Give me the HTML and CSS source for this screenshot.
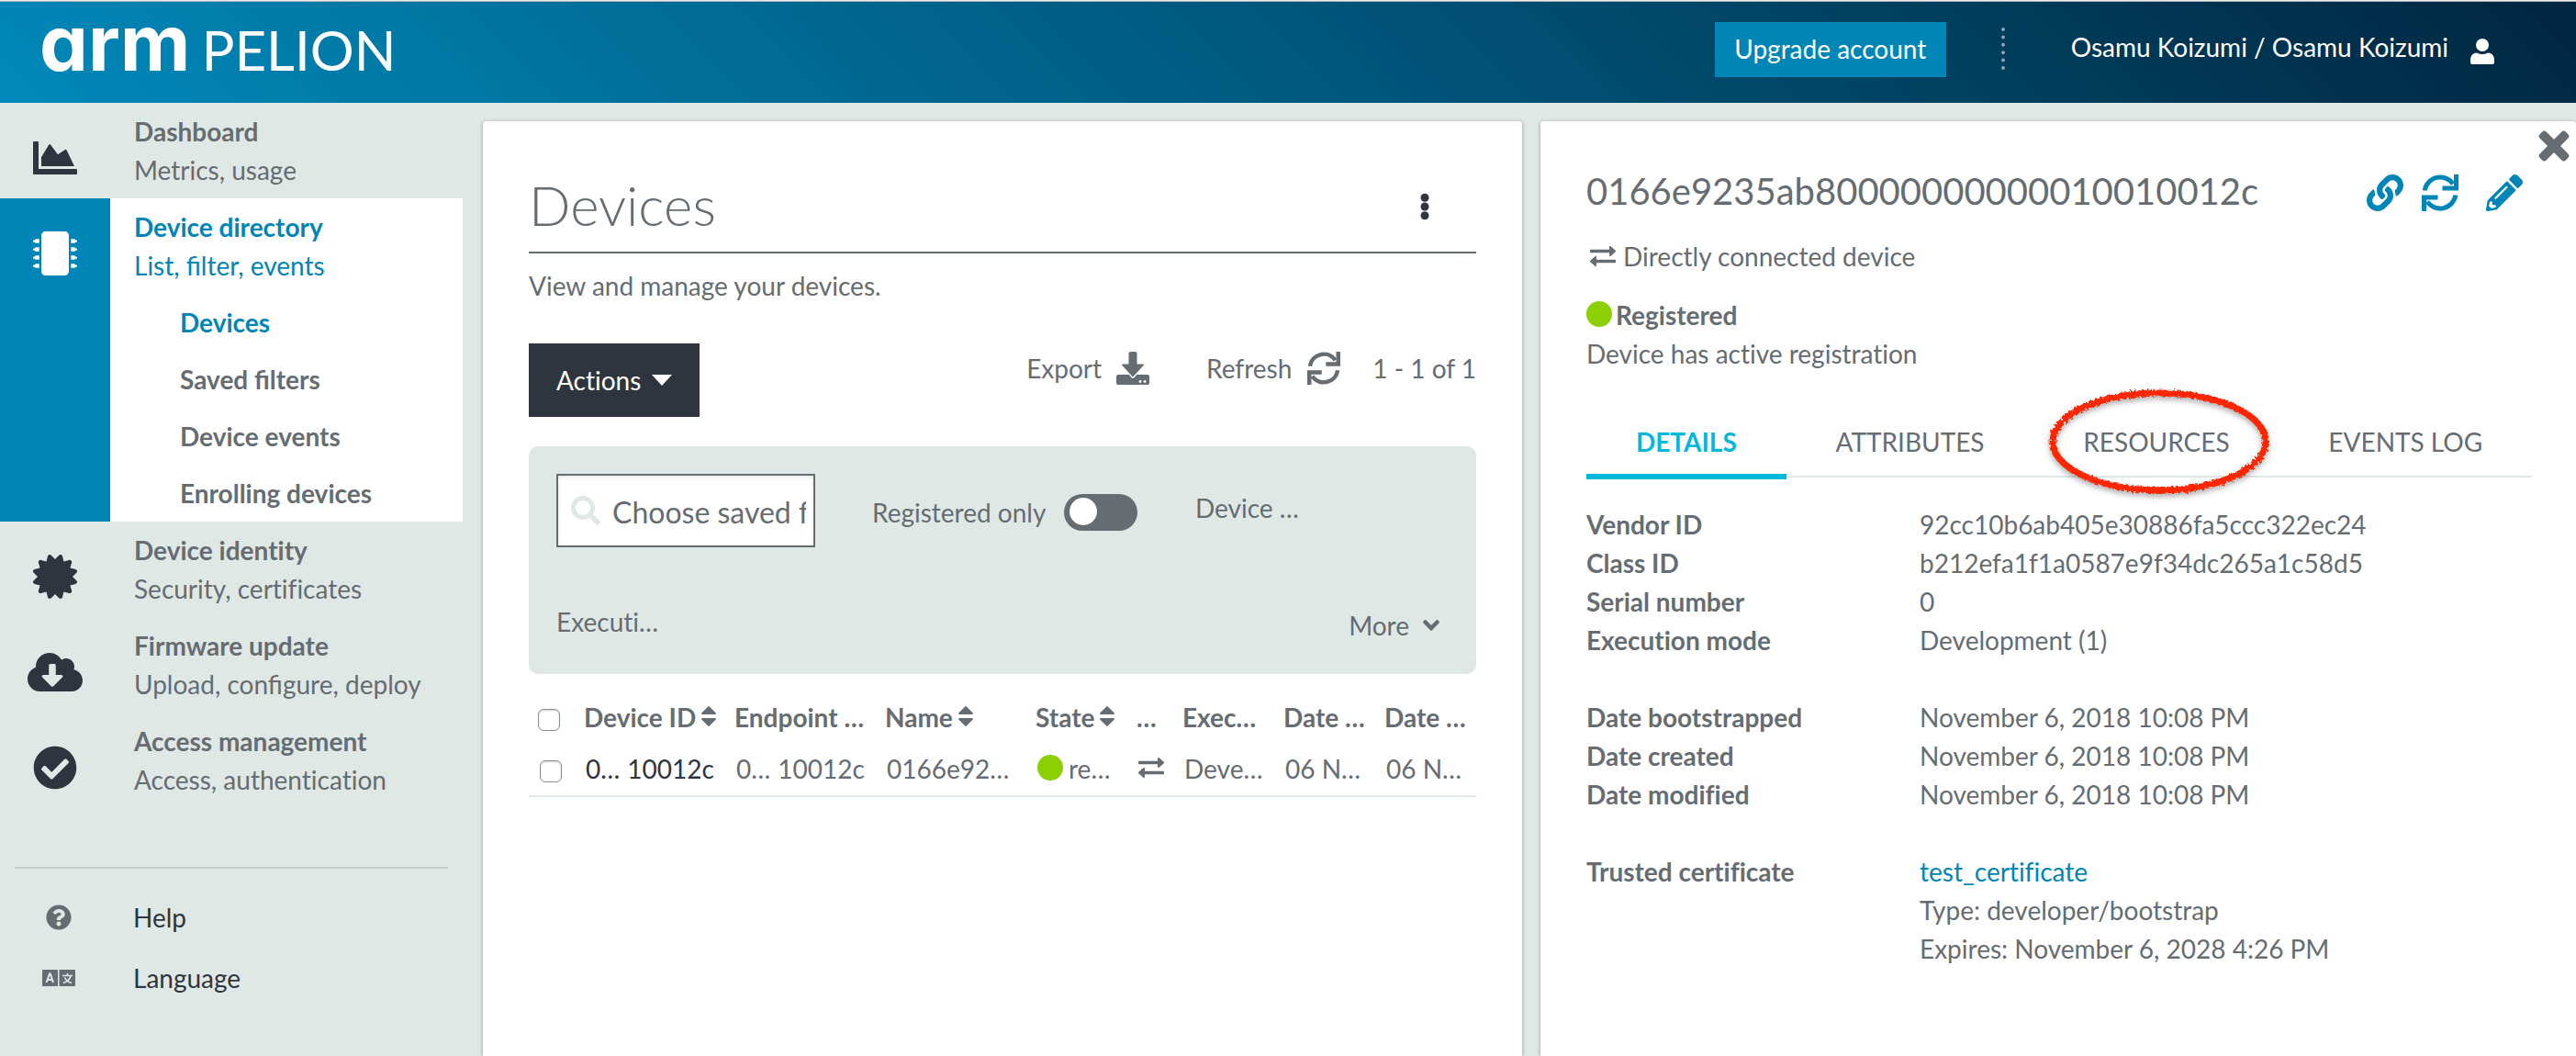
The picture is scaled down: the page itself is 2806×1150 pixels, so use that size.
FILE: index.html
```html
<!DOCTYPE html>
<html lang="en">
<head>
<meta charset="utf-8">
<title>Devices - Arm Pelion</title>
<meta name="viewport" content="width=device-width, initial-scale=1">
<link rel="stylesheet" href="styles.css">
</head>
<body>
<svg class="sprite" aria-hidden="true">
  <symbol id="i-refresh" viewBox="0 0 40 40">
    <path d="M3.2 17.5A17 17 0 0 1 34 10.3M36.800 22.500A17 17 0 0 1 6 29.700" fill="none" stroke="currentColor" stroke-width="5"/>
    <path d="M35 0h5v17.500H22.500v-5H35zM5 40H0V22.500h17.500v5H5z" fill="currentColor"/>
  </symbol>
  <symbol id="i-exchange" viewBox="0 0 28 22">
    <path d="M1 3.800h20V1a1 1 0 0 1 1.700-.7l5 4.500a1 1 0 0 1 0 1.400l-5 4.500A1 1 0 0 1 21 10V7.200H1a1 1 0 0 1-1-1V4.800a1 1 0 0 1 1-1zM27 14.800H7V12a1 1 0 0 0-1.700-.7l-5 4.500a1 1 0 0 0 0 1.400l5 4.500A1 1 0 0 0 7 21v-2.800h20a1 1 0 0 0 1-1v-1.400a1 1 0 0 0-1-1z" fill="currentColor"/>
  </symbol>
  <symbol id="i-sort" viewBox="0 0 16 22">
    <path d="M7.300.4a1 1 0 0 1 1.400 0l6.900 6.900c.6.600.2 1.700-.7 1.700H1.100C.2 9-.2 7.900.4 7.300zM7.300 21.600a1 1 0 0 0 1.400 0l6.900-6.900c.6-.6.200-1.700-.7-1.700H1.100c-.9 0-1.300 1.100-.7 1.700z" fill="currentColor"/>
  </symbol>
</svg>

<header class="header">
  <a class="logo" href="#"><span class="logo-arm">arm</span><span class="logo-pelion">PELION</span></a>
  <div class="header-right">
    <button class="upgrade" type="button">Upgrade account</button>
    <span class="dots"></span>
    <a class="account" href="#">
      <span>Osamu Koizumi / Osamu Koizumi</span>
      <svg width="26" height="28" viewBox="0 0 26 28" fill="currentColor"><circle cx="13" cy="7" r="7"/><path d="M7 15.500c4 2 8 2 12 0 4 0 7 3 7 7.500v3a2 2 0 0 1-2 2H2a2 2 0 0 1-2-2v-3c0-4.500 3-7.500 7-7.500z"/></svg>
    </a>
  </div>
</header>

<div class="page">
  <div class="sidebar">
    <nav class="nav">
      <div class="nav-item">
        <div class="nav-icon"><svg width="48" height="48" viewBox="0 0 512 512" fill="currentColor"><path d="M500 384c6.600 0 12 5.400 12 12v40c0 6.600-5.400 12-12 12H12c-6.600 0-12-5.400-12-12V76c0-6.600 5.400-12 12-12h40c6.600 0 12 5.400 12 12v308h436zM372.700 159.500L288 216l-85.300-113.700c-5.100-6.800-15.500-6.300-19.900 1L96 248v104h384l-89.900-187.800c-3.200-6.500-11.400-8.700-17.400-4.700z"/></svg></div>
        <div class="nav-body"><a href="#"><strong>Dashboard</strong><span>Metrics, usage</span></a></div>
      </div>
      <div class="nav-item active">
        <div class="nav-icon"><svg width="48" height="48" viewBox="0 0 512 512" fill="currentColor"><path d="M416 48v416c0 26.500-21.500 48-48 48H144c-26.500 0-48-21.500-48-48V48c0-26.500 21.500-48 48-48h224c26.500 0 48 21.500 48 48z"/><path id="pins" d="M512 106v12a6 6 0 0 1-6 6h-18v6a6 6 0 0 1-6 6h-42V88h42a6 6 0 0 1 6 6v6h18a6 6 0 0 1 6 6zM0 106v12a6 6 0 0 0 6 6h18v6a6 6 0 0 0 6 6h42V88H30a6 6 0 0 0-6 6v6H6a6 6 0 0 0-6 6z"/><use href="#pins" y="96"/><use href="#pins" y="192"/><use href="#pins" y="288"/></svg></div>
        <div class="nav-body">
          <a href="#"><strong>Device directory</strong><span class="lig">List, filter, events</span></a>
          <ul class="subnav">
            <li><a class="current" href="#">Devices</a></li>
            <li><a class="lig" href="#">Saved filters</a></li>
            <li><a href="#">Device events</a></li>
            <li><a href="#">Enrolling devices</a></li>
          </ul>
        </div>
      </div>
      <div class="nav-item">
        <div class="nav-icon"><svg width="48" height="48" viewBox="0 0 512 512" fill="currentColor"><path d="M458.622 255.920l45.985-45.005c13.708-12.977 7.316-36.039-10.664-40.339l-62.650-15.990 17.661-62.015c4.991-17.838-11.829-34.663-29.661-29.671l-61.994 17.667-15.984-62.671C337.085.197 313.765-6.276 300.990 7.228L256 53.570 211.011 7.229c-12.630-13.351-36.047-7.234-40.325 10.668l-15.984 62.671-61.995-17.667C74.870 57.907 58.056 74.738 63.046 92.572l17.661 62.015-62.650 15.990C.069 174.878-6.310 197.944 7.392 210.915l45.985 45.005-45.985 45.004c-13.708 12.977-7.316 36.039 10.664 40.339l62.650 15.990-17.661 62.015c-4.991 17.838 11.829 34.663 29.661 29.671l61.994-17.667 15.984 62.671c4.439 18.575 27.696 24.018 40.325 10.668L256 458.610l44.989 46.001c12.500 13.488 35.987 7.486 40.325-10.668l15.984-62.671 61.994 17.667c17.836 4.994 34.651-11.837 29.661-29.671l-17.661-62.015 62.650-15.990c17.987-4.302 24.366-27.367 10.664-40.339l-45.984-45.004z"/></svg></div>
        <div class="nav-body"><a href="#"><strong>Device identity</strong><span>Security, certificates</span></a></div>
      </div>
      <div class="nav-item">
        <div class="nav-icon"><svg width="60" height="48" viewBox="0 0 640 512" fill="currentColor"><path d="M537.600 226.600c4.100-10.700 6.400-22.400 6.400-34.600 0-53-43-96-96-96-19.700 0-38.100 6-53.300 16.200C367 64.200 315.300 32 256 32c-88.400 0-160 71.600-160 160 0 2.700.1 5.400.2 8.100C40.200 219.800 0 273.200 0 336c0 79.500 64.500 144 144 144h368c70.700 0 128-57.300 128-128 0-61.900-44-113.600-102.400-125.400zm-132.900 88.700L299.300 420.700c-6.200 6.200-16.400 6.200-22.600 0L171.300 315.300c-10.100-10.100-2.900-27.300 11.300-27.300H248V176c0-8.800 7.200-16 16-16h48c8.800 0 16 7.200 16 16v112h65.400c14.200 0 21.400 17.200 11.300 27.300z"/></svg></div>
        <div class="nav-body"><a href="#"><strong>Firmware update</strong><span class="lig">Upload, configure, deploy</span></a></div>
      </div>
      <div class="nav-item">
        <div class="nav-icon"><svg width="48" height="48" viewBox="0 0 512 512" fill="currentColor"><path d="M504 256c0 136.967-111.033 248-248 248S8 392.967 8 256 119.033 8 256 8s248 111.033 248 248zM227.314 387.314l184-184c6.248-6.248 6.248-16.379 0-22.627l-22.627-22.627c-6.248-6.249-16.379-6.249-22.628 0L216 308.118l-70.059-70.059c-6.248-6.248-16.379-6.248-22.628 0l-22.627 22.627c-6.248 6.248-6.248 16.379 0 22.627l104 104c6.249 6.249 16.379 6.249 22.628.001z"/></svg></div>
        <div class="nav-body"><a href="#"><strong>Access management</strong><span>Access, authentication</span></a></div>
      </div>
    </nav>
    <nav class="support">
      <a href="#"><span class="support-icon"><svg width="28" height="28" viewBox="0 0 512 512" fill="currentColor"><path d="M504 256c0 136.997-111.043 248-248 248S8 392.997 8 256C8 119.083 119.043 8 256 8s248 111.083 248 248zM262.655 90c-54.497 0-89.255 22.957-116.549 63.758-3.536 5.286-2.353 12.415 2.715 16.258l34.699 26.310c5.205 3.947 12.621 3.008 16.665-2.122 17.864-22.658 30.113-35.797 57.303-35.797 20.429 0 45.698 13.148 45.698 32.958 0 14.976-12.363 22.667-32.534 33.976C247.128 238.528 216 254.941 216 296v4c0 6.627 5.373 12 12 12h56c6.627 0 12-5.373 12-12v-1.333c0-28.462 83.186-29.647 83.186-106.667 0-58.002-60.165-102-116.531-102zM256 338c-25.365 0-46 20.635-46 46 0 25.364 20.635 46 46 46s46-20.636 46-46c0-25.365-20.635-46-46-46z"/></svg></span>Help</a>
      <a href="#"><span class="support-icon"><svg width="36" height="18" viewBox="0 0 36 18"><rect width="17" height="18" rx="1" fill="currentColor"/><rect x="18.500" width="17.500" height="18" rx="1" fill="currentColor"/><path d="M4.500 14 8 4.500h.8L12 14M6 11h5" fill="none" stroke="#e0e8e6" stroke-width="2"/><path d="M22 6.500h11M27.500 4v2.500M31 7c-1 3.500-4 6-8 7.500M24.500 8.500c1 2.500 4 5 7.500 6" fill="none" stroke="#e0e8e6" stroke-width="1.600"/></svg></span>Language</a>
    </nav>
  </div>

  <main class="cards">
    <section class="card devices">
      <div class="card-title">
        <h1>Devices</h1>
        <button class="kebab" type="button" aria-label="Page menu"><svg width="10" height="30" viewBox="0 0 10 30" fill="currentColor"><circle cx="5" cy="5.300" r="4.500"/><circle cx="5" cy="15" r="4.500"/><circle cx="5" cy="24.700" r="4.500"/></svg></button>
      </div>
      <p class="intro">View and manage your devices.</p>

      <div class="toolbar">
        <button class="actions" type="button">Actions <svg width="22" height="12" viewBox="0 0 22 12"><path d="M0 0h22L11 12z" fill="#fff"/></svg></button>
        <div class="tools">
          <button class="tool" type="button">Export <svg width="36" height="36" viewBox="0 0 36 36"><rect y="25" width="36" height="11" rx="2" fill="currentColor"/><path d="M15.500 0h5a2 2 0 0 1 2 2v11.500h7L18 27 6.500 13.500h7V2a2 2 0 0 1 2-2z" fill="currentColor" stroke="#fff" stroke-width="4" stroke-linejoin="round"/><path d="M15.500 0h5a2 2 0 0 1 2 2v11.500h6.500q2 0 .6 1.600L19 26.500q-1 1-2 0L6.400 15.100Q5 13.500 7 13.500h6.500V2a2 2 0 0 1 2-2z" fill="currentColor"/><circle cx="26" cy="32.500" r="1.400" fill="#fff"/><circle cx="31" cy="32.500" r="1.400" fill="#fff"/></svg></button>
          <button class="tool" type="button">Refresh <svg width="38" height="36"><use href="#i-refresh"/></svg></button>
          <span>1 - 1 of 1</span>
        </div>
      </div>

      <div class="filters">
        <div class="search">
          <svg width="32" height="32" viewBox="0 0 512 512" fill="currentColor"><path d="M505 442.700L405.300 343c-4.500-4.500-10.600-7-17-7H372c27.600-35.300 44-79.700 44-128C416 93.100 322.900 0 208 0S0 93.100 0 208s93.100 208 208 208c48.300 0 92.700-16.400 128-44v16.300c0 6.400 2.500 12.500 7 17l99.700 99.700c9.400 9.400 24.600 9.400 33.900 0l28.300-28.300c9.400-9.400 9.400-24.600.1-34zM208 336c-70.700 0-128-57.200-128-128 0-70.700 57.200-128 128-128 70.700 0 128 57.200 128 128 0 70.700-57.200 128-128 128z"/></svg>
          <input type="text" placeholder="Choose saved filter" aria-label="Choose saved filter">
        </div>
        <label class="switch">Registered only <input type="checkbox" role="switch"></label>
        <span class="filter-device">Device …</span>
        <span>Executi…</span>
        <button class="more" type="button">More <svg width="18" height="12" viewBox="0 0 18 12"><path d="M2.500 2.500 9 9l6.500-6.500" fill="none" stroke="currentColor" stroke-width="4.500" stroke-linecap="round"/></svg></button>
      </div>

      <table class="grid">
        <colgroup><col class="c-check"><col class="c-wide"><col class="c-wide"><col class="c-wide"><col class="c-mid"><col class="c-slim"><col class="c-mid"><col class="c-mid"><col class="c-last"></colgroup>
        <thead>
          <tr>
            <th><input type="checkbox" aria-label="Select all devices"></th>
            <th><span class="cell">Device ID<svg class="sort" width="16" height="22"><use href="#i-sort"/></svg></span></th>
            <th>Endpoint …</th>
            <th><span class="cell">Name<svg class="sort" width="16" height="22"><use href="#i-sort"/></svg></span></th>
            <th><span class="cell">State<svg class="sort" width="16" height="22"><use href="#i-sort"/></svg></span></th>
            <th>…</th>
            <th>Exec…</th>
            <th>Date …</th>
            <th>Date …</th>
          </tr>
        </thead>
        <tbody>
          <tr>
            <td><input type="checkbox" aria-label="Select device 0166e9235ab80000000000010010012c"></td>
            <td class="id"><span class="cell split"><span>0…</span><span>10012c</span></span></td>
            <td><span class="cell split"><span>0…</span><span>10012c</span></span></td>
            <td>0166e92…</td>
            <td><span class="cell state"><i class="dot"></i>re…</span></td>
            <td><svg class="direct" width="28" height="22"><use href="#i-exchange"/></svg></td>
            <td>Deve…</td>
            <td>06 N…</td>
            <td>06 N…</td>
          </tr>
        </tbody>
      </table>
    </section>

    <section class="card detail">
      <button class="close" type="button" aria-label="Close"><svg width="34" height="34" viewBox="0 0 34 34" fill="currentColor"><rect x="-3" y="12" width="40" height="10" rx="3.500" transform="rotate(45 17 17)"/><rect x="-3" y="12" width="40" height="10" rx="3.500" transform="rotate(-45 17 17)"/></svg></button>
      <div class="detail-body">
        <div class="detail-title">
          <h2>0166e9235ab80000000000010010012c</h2>
          <div class="detail-actions">
            <button type="button" aria-label="Copy link"><svg width="40" height="40" viewBox="0 0 512 512" fill="currentColor"><path d="M326.612 185.391c59.747 59.809 58.927 155.698.36 214.590-.11.120-.24.250-.36.370l-67.200 67.200c-59.270 59.270-155.699 59.262-214.960 0-59.270-59.260-59.270-155.700 0-214.960l37.106-37.106c9.840-9.840 26.786-3.300 27.294 10.606.648 17.722 3.826 35.527 9.690 52.721 1.986 5.822.567 12.262-3.783 16.612l-13.087 13.087c-28.026 28.026-28.905 73.660-1.155 101.960 28.024 28.579 74.086 28.749 102.325.51l67.200-67.190c28.191-28.191 28.073-73.757 0-101.830-3.701-3.694-7.429-6.564-10.341-8.569a16.037 16.037 0 0 1-6.947-12.606c-.396-10.567 3.348-21.456 11.698-29.806l21.054-21.055c5.521-5.521 14.182-6.199 20.584-1.731a152.482 152.482 0 0 1 20.522 17.197zM467.547 44.449c-59.261-59.262-155.690-59.270-214.960 0l-67.200 67.200c-.12.120-.25.250-.36.370-58.566 58.892-59.387 154.781.36 214.590a152.454 152.454 0 0 0 20.521 17.196c6.402 4.468 15.064 3.789 20.584-1.731l21.054-21.055c8.350-8.350 12.094-19.239 11.698-29.806a16.037 16.037 0 0 0-6.947-12.606c-2.912-2.005-6.640-4.875-10.341-8.569-28.073-28.073-28.191-73.639 0-101.830l67.200-67.190c28.239-28.239 74.300-28.069 102.325.51 27.750 28.300 26.872 73.934-1.155 101.960l-13.087 13.087c-4.350 4.350-5.769 10.790-3.783 16.612 5.864 17.194 9.042 34.999 9.690 52.721.509 13.906 17.454 20.446 27.294 10.606l37.106-37.106c59.271-59.259 59.271-155.699.001-214.959z"/></svg></button>
            <button type="button" aria-label="Refresh device"><svg width="40" height="40"><use href="#i-refresh"/></svg></button>
            <button class="edit" type="button" aria-label="Edit device"><svg width="40" height="40" viewBox="0 0 512 512" fill="currentColor"><path d="M497.900 142.100l-46.100 46.100c-4.700 4.700-12.300 4.700-17 0l-111-111c-4.700-4.700-4.700-12.300 0-17l46.100-46.100c18.700-18.700 49.100-18.700 67.900 0l60.100 60.100c18.800 18.700 18.800 49.100 0 67.900zM284.200 99.800L21.600 362.400.4 483.900c-2.900 16.400 11.400 30.600 27.800 27.800l121.500-21.300 262.600-262.600c4.700-4.700 4.700-12.300 0-17l-111-111c-4.800-4.700-12.400-4.700-17.100 0zM124.100 339.900c-5.500-5.500-5.500-14.300 0-19.800l154-154c5.500-5.500 14.300-5.500 19.800 0s5.500 14.300 0 19.800l-154 154c-5.500 5.500-14.300 5.500-19.800 0zM88 424h48v36.300l-64.500 11.300-31.100-31.100L51.700 376H88v48z"/></svg></button>
          </div>
        </div>

        <p class="connection"><svg width="28" height="22"><use href="#i-exchange"/></svg>Directly connected device</p>
        <p class="registered"><i class="dot"></i><strong>Registered</strong></p>
        <p>Device has active registration</p>

        <div class="tabs" role="tablist">
          <button class="tab selected" type="button" role="tab" aria-selected="true">DETAILS</button>
          <button class="tab" type="button" role="tab">ATTRIBUTES</button>
          <button class="tab" type="button" role="tab">RESOURCES
            <svg class="marker" width="260" height="130" viewBox="0 0 260 130" aria-hidden="true">
              <defs><filter id="rough" x="-10%" y="-20%" width="120%" height="140%"><feTurbulence type="fractalNoise" baseFrequency="0.35" numOctaves="2" seed="4"/><feDisplacementMap in="SourceGraphic" scale="6"/></filter></defs>
              <ellipse cx="133" cy="65" rx="116" ry="53" fill="none" stroke="#ff2600" stroke-width="7" filter="url(#rough)"/>
            </svg>
          </button>
          <button class="tab" type="button" role="tab">EVENTS LOG</button>
        </div>

        <dl>
          <dt>Vendor ID</dt><dd>92cc10b6ab405e30886fa5ccc322ec24</dd>
          <dt>Class ID</dt><dd>b212efa1f1a0587e9f34dc265a1c58d5</dd>
          <dt>Serial number</dt><dd>0</dd>
          <dt>Execution mode</dt><dd>Development (1)</dd>
        </dl>
        <dl>
          <dt>Date bootstrapped</dt><dd>November 6, 2018 10:08 PM</dd>
          <dt>Date created</dt><dd>November 6, 2018 10:08 PM</dd>
          <dt>Date modified</dt><dd>November 6, 2018 10:08 PM</dd>
        </dl>
        <dl>
          <dt>Trusted certificate</dt>
          <dd><a href="#">test_certificate</a><br>Type: developer/bootstrap<br>Expires: November 6, 2028 4:26 PM</dd>
        </dl>
      </div>
    </section>
  </main>
</div>
</body>
</html>
```
FILE: styles.css
```css
:root {
  --grey: #656c72;
  --dark: #2f353f;
  --blue: #0086b6;
  --cyan: #00b9da;
  --green: #8cd003;
  --mist: #e0e8e6;
}

* { box-sizing: border-box; }

body {
  margin: 0;
  min-height: 100vh;
  display: flex;
  flex-direction: column;
  border-top: 1px solid #ececec;
  background: var(--mist);
  color: var(--grey);
  font: 28px/42px Lato, "Liberation Sans", sans-serif;
  font-variant-ligatures: no-common-ligatures;
}

h1, h2, p, ul, dl, dd { margin: 0; padding: 0; }
ul { list-style: none; }
a { color: inherit; text-decoration: none; }
strong, dt, th { font-weight: 700; }
svg { display: block; flex: none; }
button {
  margin: 0;
  padding: 0;
  border: 0;
  background: none;
  color: inherit;
  font: inherit;
  font-variant-ligatures: inherit;
  cursor: pointer;
}
.sprite { position: absolute; width: 0; height: 0; }
.lig { font-variant-ligatures: common-ligatures; }

/* Header */
.header {
  display: flex;
  justify-content: space-between;
  align-items: flex-start;
  height: 111px;
  border-top: 1px solid #aeb4b7;
  background: linear-gradient(45deg, #0089ba, #002640);
  color: #fff;
}
.logo {
  display: flex;
  align-items: baseline;
  gap: 12px;
  padding-left: 43px;
  line-height: 90px;
}
.logo-arm {
  font-family: Inter, sans-serif;
  font-size: 84px;
  font-weight: 700;
  font-feature-settings: "cv11";
}
.logo-pelion { font-size: 60px; }
.header-right {
  display: flex;
  align-items: flex-start;
  padding: 22px 89px 0 0;
}
.upgrade {
  width: 252px;
  height: 60px;
  padding-bottom: 2px;
  background: var(--blue);
}
.dots {
  height: 46px;
  margin: 6px 72px 0 60px;
  border-left: 4px dotted #8ba3b3;
}
.account {
  display: flex;
  align-items: center;
  gap: 24px;
  padding-top: 6px;
}
.account svg { margin-top: 10px; }

/* Sidebar */
.page { flex: 1; display: flex; }
.sidebar { flex: none; width: 526px; }
.nav { width: 504px; }
.nav-item { display: flex; }
.nav-icon {
  flex: none;
  display: flex;
  justify-content: center;
  width: 120px;
  padding-top: 36px;
  color: var(--dark);
}
.nav-body { flex: 1; padding: 10px 0 10px 26px; }
.nav-body a, .nav-body strong, .nav-body span { display: block; }
.active .nav-icon { background: var(--blue); color: #fff; }
.active .nav-body { background: #fff; }
.active .nav-body > a, .subnav .current { color: var(--blue); }
.subnav { padding: 10px 0 0 50px; font-weight: 700; }
.subnav li { padding: 10px 0; }
.subnav li:last-child { padding-bottom: 0; }
.support {
  display: flex;
  flex-direction: column;
  gap: 24px;
  margin: 64px 38px 0 16px;
  padding-top: 32px;
  border-top: 2px solid #c1cecb;
  color: var(--dark);
}
.support a { display: flex; align-items: center; }
.support-icon {
  display: flex;
  justify-content: center;
  width: 96px;
  margin-right: 33px;
  color: var(--grey);
}

/* Cards */
.cards {
  flex: 1;
  display: grid;
  grid-template-columns: calc(50% - 8px) 1fr;
  gap: 20px;
  min-width: 0;
  padding-top: 20px;
}
.card {
  min-width: 0;
  border-radius: 4px 4px 0 0;
  background: #fff;
  box-shadow: 0 1px 4px rgba(0, 0, 0, 0.35);
}
.devices { padding: 50px; }
.card-title {
  display: flex;
  justify-content: space-between;
  align-items: center;
  height: 94px;
  padding: 0 51px 10px 0;
  border-bottom: 2px solid var(--grey);
}
h1 { font-size: 60px; font-weight: 300; line-height: 82px; }
.kebab { padding-top: 4px; color: var(--dark); }
.intro { margin-top: 14px; }

.toolbar {
  display: flex;
  justify-content: space-between;
  align-items: flex-start;
  margin-top: 42px;
}
.actions {
  display: flex;
  align-items: center;
  gap: 12px;
  height: 80px;
  padding: 0 30px;
  background: var(--dark);
  color: #fff;
}
.tools { display: flex; align-items: center; padding-top: 6px; }
.tool { display: flex; align-items: center; gap: 16px; }
.tool:first-child { margin-right: 62px; }
.tool + span { margin-left: 34px; }

.filters {
  display: grid;
  grid-template-columns: 344px 352px 1fr;
  row-gap: 60px;
  margin-top: 32px;
  padding: 30px;
  border-radius: 10px;
  background: var(--mist);
}
.search {
  display: flex;
  align-items: center;
  gap: 13px;
  width: 282px;
  height: 80px;
  padding: 0 8px 0 14px;
  border: 2px solid var(--grey);
  background: #fff;
  box-shadow: inset 0 2px 4px rgba(0, 0, 0, 0.1);
}
.search svg { color: var(--mist); }
.search input {
  flex: 1;
  min-width: 0;
  padding: 2px 0 0;
  border: 0;
  outline: 0;
  background: none;
  font: 32px Lato, "Liberation Sans", sans-serif;
  font-variant-ligatures: inherit;
}
.search input::placeholder { color: var(--grey); opacity: 1; }
.switch { display: flex; align-items: center; gap: 20px; padding-top: 4px; }
.switch input {
  appearance: none;
  width: 80px;
  height: 40px;
  margin: 0;
  padding: 4px 6px;
  border-radius: 20px;
  background: var(--grey);
}
.switch input::before {
  content: "";
  display: block;
  width: 30px;
  height: 30px;
  border-radius: 50%;
  background: #fff;
}
.filter-device { padding-top: 16px; }
.more {
  grid-column: 3;
  justify-self: end;
  display: flex;
  align-items: center;
  gap: 15px;
  padding: 4px 10px 2px 0;
}

/* Device table */
.grid {
  width: 100%;
  margin-top: 26px;
  border-collapse: collapse;
  table-layout: fixed;
}
.c-check { width: 60px; }
.c-wide { width: 164px; }
.c-mid { width: 110px; }
.c-slim { width: 50px; }
.c-last { width: 100px; }
.grid th, .grid td {
  padding: 0;
  text-align: left;
  vertical-align: top;
  white-space: nowrap;
}
.grid td {
  padding: 14px 0 8px 2px;
  border-bottom: 2px solid var(--mist);
}
.grid input {
  appearance: none;
  display: block;
  width: 24px;
  height: 24px;
  margin: 12px 0 0 10px;
  border: 1px solid #8e8e8e;
  border-radius: 6px;
  background: #fff;
  box-shadow: inset 0 1px 2px rgba(0, 0, 0, 0.2);
}
.cell { display: flex; }
.sort { margin: 9px 0 0 6px; }
.split { gap: 8px; }
.id { color: var(--dark); }
.dot {
  flex: none;
  width: 28px;
  height: 28px;
  border-radius: 50%;
  background: var(--green);
}
.state { gap: 6px; }
.state .dot { margin-top: 6px; }
.direct { margin-top: 9px; }

/* Device detail */
.detail { display: flex; flex-direction: column; }
.close { align-self: flex-end; margin: 10px 7px 0 0; }
.detail-body { padding: 8px 48px 50px 50px; }
.detail-title { display: flex; justify-content: space-between; align-items: center; }
h2 { font-size: 40px; font-weight: 400; line-height: 48px; }
.detail-actions {
  display: flex;
  gap: 20px;
  padding: 4px 10px 0 0;
  color: var(--blue);
}
.edit { margin-left: 10px; }
.connection, .registered { display: flex; align-items: center; }
.connection { gap: 8px; margin-top: 26px; padding-left: 4px; }
.registered { gap: 4px; margin-top: 22px; }
.registered .dot { margin-bottom: 2px; }

.tabs {
  display: flex;
  margin-top: 54px;
  background: linear-gradient(var(--mist), var(--mist)) left 0 bottom 2px / 100% 2px no-repeat;
}
.tab {
  position: relative;
  flex: 1 1 auto;
  padding-bottom: 14px;
  border-bottom: 6px solid transparent;
}
.selected {
  border-color: var(--cyan);
  color: var(--cyan);
  font-weight: 700;
}
.marker {
  position: absolute;
  left: 50%;
  top: 50%;
  transform: translate(-50%, -50%);
  margin-top: -7px;
  filter: drop-shadow(0 3px 3px rgba(0, 0, 0, 0.35));
  overflow: visible;
  pointer-events: none;
}

dl {
  display: grid;
  grid-template-columns: 363px 1fr;
  margin-top: 42px;
}
.tabs + dl { margin-top: 28px; }
dd a { color: var(--blue); }
```
